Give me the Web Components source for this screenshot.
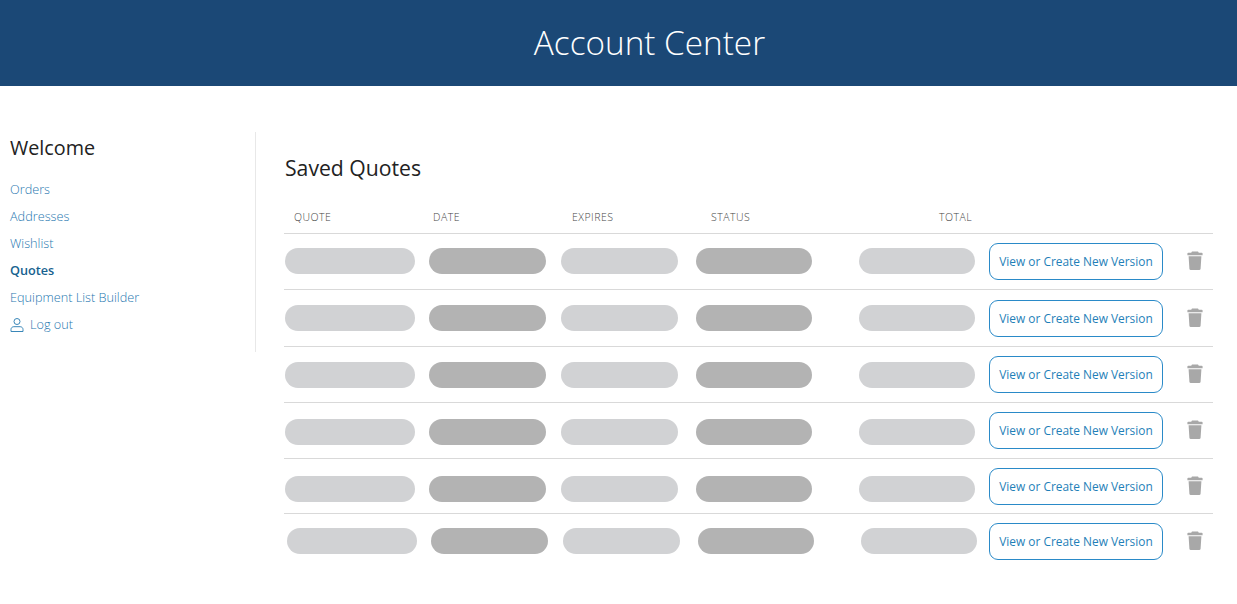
<!DOCTYPE html>
<html><head><meta charset="utf-8"><title>Account Center</title>
<style>
html,body{margin:0;padding:0;background:#fff}
body{font-family:"Open Sans","Noto Sans",sans-serif;width:1237px;height:604px;overflow:hidden}
</style></head><body>
<account-page></account-page>
<script>
const SP='"Open Sans","Noto Sans",sans-serif';
class SiteHeader extends HTMLElement{constructor(){super();this.attachShadow({mode:'open'}).innerHTML=`<style>
:host{display:flex;height:86px;background:#1b4876;color:#fff;align-items:center;justify-content:center;padding-left:62px;box-sizing:border-box}
span{font:300 33.300px/1 ${SP}}
</style><span><slot></slot></span>`}}
customElements.define('site-header',SiteHeader);

class SideLink extends HTMLElement{constructor(){super();this.attachShadow({mode:'open'}).innerHTML=`<style>
:host{display:flex;align-items:center;gap:6px;height:27px;font:300 12.700px/27px ${SP};color:#1f78b0}
:host([active]){font-weight:600;color:#17628f}
svg{display:block}
</style><slot name="icon"></slot><slot></slot>`}}
customElements.define('side-link',SideLink);

class SideNav extends HTMLElement{constructor(){super();this.attachShadow({mode:'open'}).innerHTML=`<style>
:host{display:block;box-sizing:border-box;width:256px;height:220px;border-right:1px solid #e8e8e8;padding:0 0 0 10px}
h2{margin:0;padding-top:2px;height:44px;box-sizing:border-box;font:400 19.800px/28px ${SP};color:#222}
nav{display:flex;flex-direction:column}
</style><h2>Welcome</h2><nav><slot></slot></nav>`}}
customElements.define('side-nav',SideNav);

class QuotePill extends HTMLElement{constructor(){super();this.attachShadow({mode:'open'}).innerHTML=`<style>
:host{display:block;height:26px;border-radius:13px;background:#d1d2d4;flex:none}
:host([dark]){background:#b3b3b3}
</style>`}}
customElements.define('quote-pill',QuotePill);

class TrashIcon extends HTMLElement{constructor(){super();this.attachShadow({mode:'open'}).innerHTML=`<style>
:host{display:block;width:16px;height:19px;color:#a8a8a8}svg{display:block}
</style><svg width="16" height="19" viewBox="0 0 16 19"><path fill="currentColor" d="M5 .5h6l.8 1.300h3c.5 0 .8.300.8.800V4.200H.4V2.600c0-.5.300-.8.800-.8h3zM1.600 5.200h12.800l-.8 12.600c0 .6-.5 1.100-1.100 1.100H3.500c-.6 0-1.100-.5-1.100-1.100z"/></svg>`}}
customElements.define('trash-icon',TrashIcon);

class QuoteRow extends HTMLElement{constructor(){super();
const h=+this.getAttribute('h'),bt=+this.getAttribute('bt'),pt=+this.getAttribute('pt'),px=+(this.getAttribute('px')||0);
this.attachShadow({mode:'open'}).innerHTML=`<style>
:host{display:flex;box-sizing:border-box;height:${h}px;border-top:1px solid #d9d9d9;align-items:flex-start}
.pills{display:flex;width:705px;box-sizing:border-box;padding:${pt-1}px 0 0 ${1+px}px;flex:none}
.a{width:130px;margin-right:14px}.b{width:117px;margin-right:15px}.c{width:117px;margin-right:18px}.d{width:116px;margin-right:47px}.e{width:116px}
button{all:unset;box-sizing:border-box;flex:none;width:174px;height:37px;margin-top:${bt-1}px;border:1px solid #2a8ac8;border-radius:9px;background:#fff;color:#1f7fb8;font:400 11.900px/35px ${SP};text-align:center;white-space:nowrap}
trash-icon{margin:${bt+7}px 0 0 24px;flex:none}
</style><div class="pills"><quote-pill class="a"></quote-pill><quote-pill class="b" dark></quote-pill><quote-pill class="c"></quote-pill><quote-pill class="d" dark></quote-pill><quote-pill class="e"></quote-pill></div><button>View or Create New Version</button><trash-icon></trash-icon>`}}
customElements.define('quote-row',QuoteRow);

class QuotesTable extends HTMLElement{constructor(){super();this.attachShadow({mode:'open'}).innerHTML=`<style>
:host{display:block;width:929px}
h1{margin:0;height:45px;box-sizing:border-box;font:400 21.200px/28px ${SP};color:#222;padding:0 0 0 1px}
.head{display:flex;height:34px;font:300 10.500px/14px ${SP};color:#444;letter-spacing:.5px}
.head span{display:block;padding-top:11px}
</style><h1>Saved Quotes</h1><div class="head">
<span style="width:139px;margin-left:10px">QUOTE</span><span style="width:139px">DATE</span><span style="width:139px">EXPIRES</span><span style="width:228px">STATUS</span><span style="width:60px">TOTAL</span></div><slot></slot>`}}
customElements.define('quotes-table',QuotesTable);

class AccountPage extends HTMLElement{constructor(){super();this.attachShadow({mode:'open'}).innerHTML=`<style>
:host{display:block}
.body{display:flex;padding-top:46px;align-items:flex-start}
main{padding:22px 0 0 28px}
.ic{display:block}
</style><site-header>Account Center</site-header><div class="body">
<side-nav>
<side-link>Orders</side-link><side-link>Addresses</side-link><side-link>Wishlist</side-link><side-link active>Quotes</side-link><side-link>Equipment List Builder</side-link>
<side-link><svg slot="icon" class="ic" width="14" height="14" viewBox="0 0 14 14" fill="none" stroke="#3a87b8" stroke-width="1"><circle cx="7" cy="3.500" r="3"/><path d="M1 13.500v-2c0-1.600 1.200-2.800 2.800-2.800h6.400c1.600 0 2.800 1.200 2.800 2.800v2z"/></svg>Log out</side-link>
</side-nav>
<main><quotes-table>
<quote-row h="56" bt="10" pt="15"></quote-row>
<quote-row h="57" bt="11" pt="16"></quote-row>
<quote-row h="56" bt="10" pt="16"></quote-row>
<quote-row h="56" bt="10" pt="17"></quote-row>
<quote-row h="55" bt="10" pt="18"></quote-row>
<quote-row h="56" bt="10" pt="15" px="2"></quote-row>
</quotes-table></main></div>`}}
customElements.define('account-page',AccountPage);
</script></body></html>
